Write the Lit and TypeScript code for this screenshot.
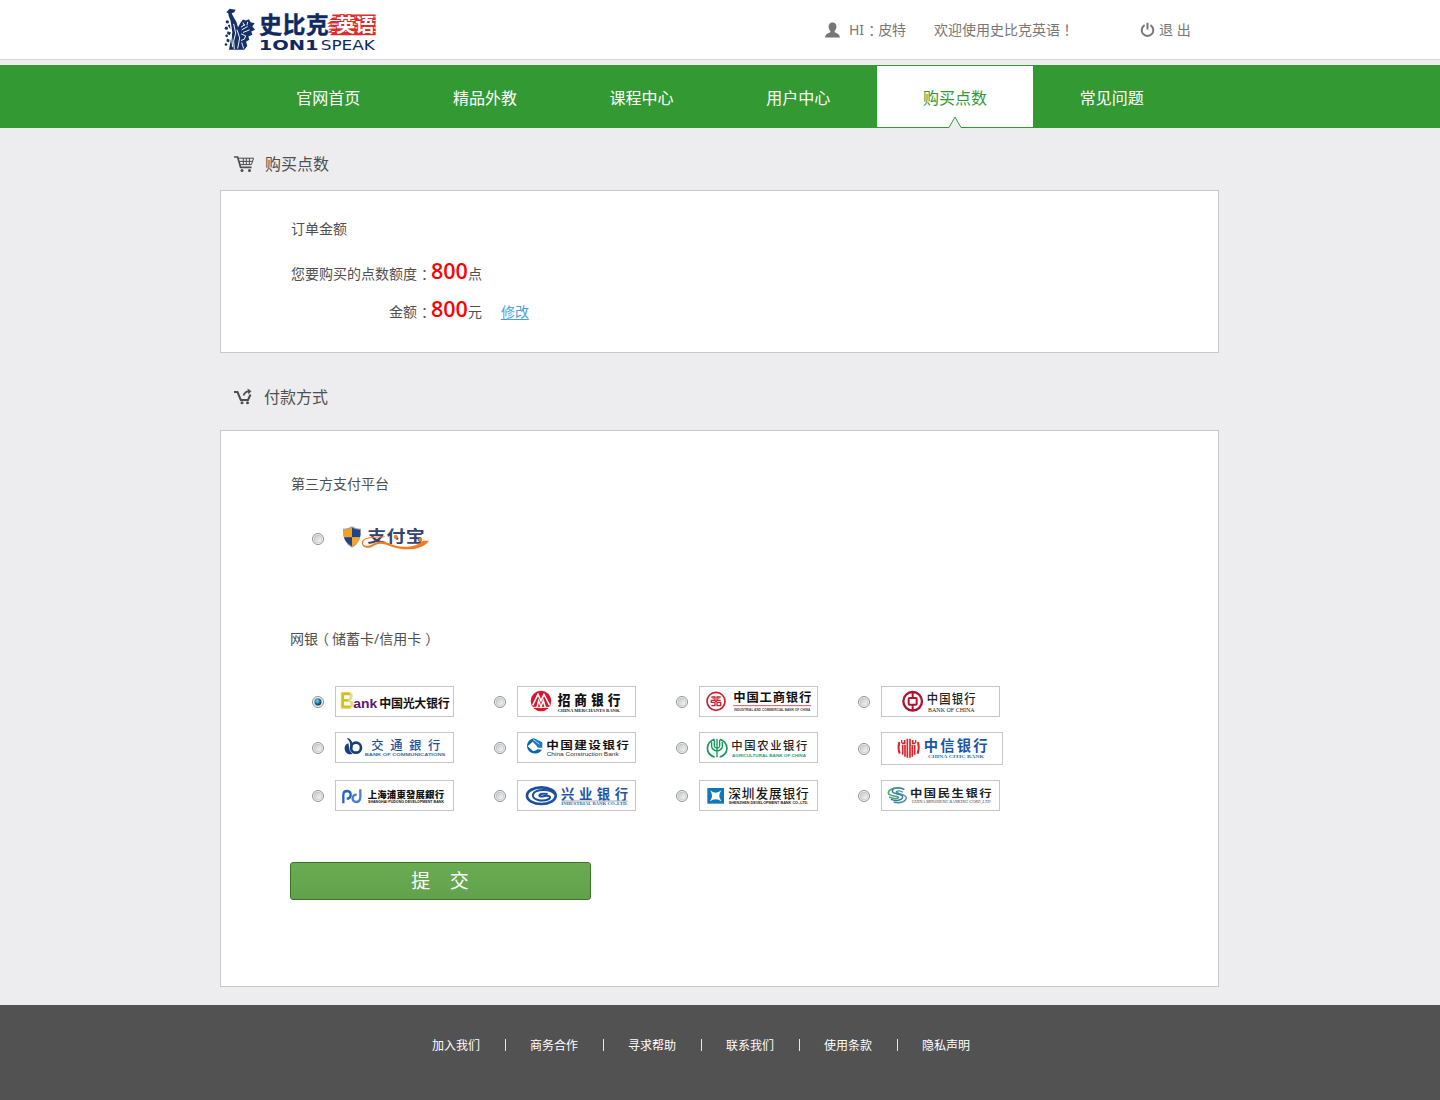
import { LitElement, html, svg, css } from "lit";
import { customElement, property, state } from "lit/decorators.js";

type Face = "sans" | "wide" | "serif" | "cjk";

/** One line of lettering inside a logo, stretched to an exact width. */
const line = (
  x: number,
  y: number,
  width: number,
  size: number,
  fill: string,
  text: string,
  face: Face = "cjk",
  weight = 700,
  extra = ""
) => svg`<text class="${face} ${extra}" x=${x} y=${y} textLength=${width}
  lengthAdjust="spacingAndGlyphs" font-size=${size} font-weight=${weight} fill=${fill}>${text}</text>`;

/** CJK lettering set one glyph per cell, from the left edge x over the given width. */
const cells = (
  x: number,
  y: number,
  width: number,
  size: number,
  fill: string,
  text: string,
  weight = 700,
  glyph = size
) => {
  const n = text.length;
  const step = (width - glyph) / (n - 1);
  const xs = Array.from({ length: n }, (_, i) => ((x + i * step) * size) / glyph).join(" ");
  return svg`<text class="cjk" transform="scale(${glyph / size} 1)" x=${xs} y=${y}
    font-size=${size} font-weight=${weight} fill=${fill}>${text}</text>`;
};

interface Bank {
  id: string;
  w?: number;
  h?: number;
  art: unknown;
}

const BANKS: Bank[] = [
  {
    id: "ceb",
    art: svg`
      <text class="sans" x="14" y="68" font-size="70" font-weight="700" fill="#e6dc72" textLength="44" lengthAdjust="spacingAndGlyphs">B</text>
      <path d="M22 24H44M22 43H40M22 62H46M23 22V64" stroke="#cdbd22" stroke-width="7" fill="none"/>
      ${line(55, 65, 72, 41, "#5b1478", "ank", "sans")}
      ${cells(133, 66, 211, 36, "#111", "中国光大银行", 700)}`,
  },
  {
    id: "cmb",
    art: svg`
      <circle cx="72" cy="45" r="31" fill="#d3172e"/>
      <path d="M47 58L63 25L72 44L81 25L98 58M60 64L65 44L72 62L79 44L85 64" stroke="#fff" stroke-width="4.5" fill="none"/>
      <path d="M44 64H100" stroke="#fff" stroke-width="3"/>
      ${cells(122, 58, 188, 40, "#111", "招商银行", 900, 38)}
      ${line(122, 77, 186, 11, "#222", "CHINA MERCHANTS BANK", "serif")}`,
  },
  {
    id: "icbc",
    art: svg`
      <circle cx="51" cy="46" r="27" fill="none" stroke="#c8202c" stroke-width="5"/>
      <path d="M37 33H48V43H37V49H48V59H37M65 33H54V43H65M54 49H65V59H54V49M41 38H44M58 38H61M48 46H54" stroke="#c8202c" stroke-width="4" fill="none"/>
      ${cells(103, 49, 234, 37, "#111", "中国工商银行", 700)}
      <path d="M103 59H337" stroke="#e0555c" stroke-width="3"/>
      ${line(105, 74, 229, 10, "#444", "INDUSTRIAL AND COMMERCIAL BANK OF CHINA", "sans")}`,
  },
  {
    id: "boc",
    art: svg`
      <circle cx="95" cy="46" r="28" fill="none" stroke="#b0122f" stroke-width="7"/>
      <rect x="83" y="36" width="24" height="20" rx="3" fill="none" stroke="#b0122f" stroke-width="6"/>
      <path d="M95 18V35M95 57V74" stroke="#b0122f" stroke-width="6"/>
      ${cells(137, 50, 147, 38, "#222", "中国银行", 500, 34)}
      ${line(141, 77, 140, 17, "#222", "BANK OF CHINA", "serif", 400)}`,
  },
  {
    id: "bocom",
    art: svg`
      <circle cx="63" cy="47" r="15" fill="none" stroke="#173f7d" stroke-width="8"/>
      <path d="M38 18C49 22 54 31 53 47L46 50C47 35 44 25 36 20Z" fill="#173f7d"/>
      <path d="M41 34C28 37 25 51 34 62C39 67 47 68 53 65C43 58 41 47 41 34Z" fill="#173f7d"/>
      ${cells(109, 53, 207, 37, "#1f4f96", "交通銀行", 500)}
      ${line(89, 71, 242, 12, "#3f689f", "BANK OF COMMUNICATIONS", "sans")}`,
  },
  {
    id: "ccb",
    art: svg`
      <path d="M51 19A24 23 0 1 0 75 53L61 52A14 13 0 0 1 48 57L32 43L47 29Z" fill="#0d63b4"/>
      <path d="M51 19L76 31V47H63L46 29Z" fill="#1c76c6"/>
      <path d="M48 31L60 43L48 55L36 43Z" fill="#fff"/>
      <path d="M49 23L68 37" stroke="#fff" stroke-width="2"/>
      ${cells(88, 51, 248, 30, "#111", "中国建设银行", 700, 38)}
      ${line(89, 72, 216, 16, "#333", "China Construction Bank", "sans", 400)}`,
  },
  {
    id: "abc",
    art: svg`
      <path d="M47 22A27 27 0 0 0 47 75M62 22A27 27 0 0 1 62 75" fill="none" stroke="#139a58" stroke-width="5"/>
      <path d="M54 20V76M38 30V44Q39 54 54 57M70 30V44Q69 54 54 57M46 24V42Q47 48 54 49M62 24V42Q61 48 54 49" fill="none" stroke="#139a58" stroke-width="4"/>
      ${cells(97, 55, 228, 34, "#222", "中国农业银行", 500)}
      ${line(99, 75, 222, 12.5, "#2f9c67", "AGRICULTURAL BANK OF CHINA", "sans")}`,
  },
  {
    id: "citic",
    w: 122,
    h: 33,
    art: svg`
      <path d="M79 20V77M87 20V77" fill="none" stroke="#d8262c" stroke-width="5"/>
      <path d="M71 24V34H63M65 39V68M72 39V74M95 24V34H103M101 39V68M94 39V74" fill="none" stroke="#d8262c" stroke-width="5"/>
      <path d="M62 24V34M104 24V34" fill="none" stroke="#d8262c" stroke-width="4"/>
      <path d="M55 30Q50 47 56 65M111 30Q116 47 110 65" fill="none" stroke="#d8262c" stroke-width="6"/>
      ${cells(128, 57, 192, 43, "#1b57a8", "中信银行", 700)}
      ${line(141, 79, 168, 15, "#3a69ae", "CHINA CITIC BANK", "serif")}`,
  },
  {
    id: "spdb",
    art: svg`
      <path d="M25 70V45Q25 33 36 33Q48 34 47 46Q46 56 35 56" fill="none" stroke="#2d64b5" stroke-width="7"/>
      <path d="M76 28V52Q75 66 63 66Q52 65 53 54Q54 44 65 44" fill="none" stroke="#4a80cc" stroke-width="7"/>
      ${cells(98, 53, 229, 28, "#111", "上海浦東發展銀行", 900)}
      ${line(99, 69, 228, 11, "#111", "SHANGHAI PUDONG DEVELOPMENT BANK", "sans", 800)}`,
  },
  {
    id: "cib",
    art: svg`
      <ellipse cx="73" cy="47" rx="43" ry="25" fill="none" stroke="#1b4f9e" stroke-width="8"/>
      <path d="M112 42C104 27 56 25 48 43C44 60 76 67 96 57C104 51 96 45 82 48C77 50 68 51 67 47C68 41 82 40 92 42" fill="none" stroke="#1b4f9e" stroke-width="6"/>
      ${cells(132, 56, 201, 40, "#1d55a3", "兴业银行", 700)}
      <path d="M133 63H332" stroke="#a3a8ae" stroke-width="3"/>
      ${line(133, 76, 199, 12, "#3567a9", "INDUSTRIAL BANK CO.,LTD.", "serif")}`,
  },
  {
    id: "sdb",
    art: svg`
      <rect x="25" y="24" width="50" height="47" fill="#0f77ba"/>
      <path d="M33 31Q50 45 67 31Q55 47 67 64Q50 51 33 64Q45 47 33 31Z" fill="#fff"/>
      ${cells(88, 55, 241, 38, "#161616", "深圳发展银行", 500)}
      ${line(89, 72, 239, 10, "#222", "SHENZHEN DEVELOPMENT BANK CO.,LTD.", "sans")}`,
  },
  {
    id: "cmbc",
    art: svg`
      <path d="M70 29C56 20 34 23 34 33C35 45 65 39 65 51C64 61 44 64 30 58" fill="none" stroke="#3471ad" stroke-width="4.5"/>
      <path d="M66 37C58 31 46 32 46 36C48 42 77 42 76 54C73 67 52 71 38 66" fill="none" stroke="#3d8f98" stroke-width="4"/>
      <path d="M54 25C34 22 21 31 22 40C26 51 53 47 53 53C50 58 34 56 24 51" fill="none" stroke="#42a56e" stroke-width="4.5"/>
      ${cells(87, 52, 245, 30, "#222", "中国民生银行", 700, 37)}
      ${line(92, 70, 236, 12, "#444", "CHINA MINSHENG BANKING CORP.,LTD", "serif", 400, "slant")}`,
  },
];

@customElement("pay-radio")
class PayRadio extends LitElement {
  @property({ type: Boolean }) on = false;

  static styles = css`
    :host {
      display: block;
      width: 13px;
      height: 13px;
      flex: none;
    }
    .dial {
      display: block;
    }
  `;

  render() {
    return html`<svg class="dial" width="13" height="13" viewBox="0 0 13 13">
      <defs>
        <linearGradient id="g" x1="0" y1="0" x2="1" y2="1">
          <stop offset="0" stop-color="#c3c6ca" />
          <stop offset="1" stop-color="#fafafa" />
        </linearGradient>
        <radialGradient id="b" cx=".4" cy=".35" r=".7">
          <stop offset="0" stop-color="#8fdcf5" />
          <stop offset=".5" stop-color="#1c7cad" />
          <stop offset="1" stop-color="#0a3350" />
        </radialGradient>
      </defs>
      <circle cx="6" cy="7" r="5.5" fill="#fafafa" stroke="#8e8f8f" />
      <circle cx="6" cy="7" r="3.9" fill="url(#g)" stroke="#b4b8bc" stroke-width=".6" />
      ${this.on ? svg`<circle cx="6" cy="7" r="3.4" fill="url(#b)"/>` : null}
    </svg>`;
  }
}

@customElement("app-root")
class AppRoot extends LitElement {
  @state() private chosen = "ceb";

  static styles = css`
    :host {
      display: block;
      width: 1440px;
      height: 1100px;
      overflow: hidden;
      background: #ededef;
      color: #505050;
      font: 14px/20px "Open Sans", "Noto Sans CJK SC", sans-serif;
    }
    .wrap {
      width: 999px;
      margin-left: 220px;
    }
    .bang {
      font-family: "Noto Sans CJK TC", sans-serif;
      line-height: 1;
    }
    .colon {
      font-feature-settings: "halt";
      margin: 0 3px 0 4px;
    }
    .latin {
      font-family: "Noto Sans", sans-serif;
    }
    .cjk {
      font-family: "Noto Sans CJK SC", sans-serif;
    }
    .sans {
      font-family: "Liberation Sans", sans-serif;
    }
    .wide {
      font-family: "DejaVu Sans", sans-serif;
    }
    .serif {
      font-family: "Liberation Serif", serif;
    }
    .slant {
      font-style: italic;
    }
    svg {
      display: block;
      flex: none;
    }

    .top {
      height: 59px;
      background: #fff;
      border-bottom: 1px solid #d6d6d6;
    }
    .bar {
      display: flex;
      height: 59px;
      align-items: center;
      color: #777;
    }
    .brand {
      margin-right: 445px;
    }
    .hello {
      width: 85px;
      margin-left: 9px;
    }
    .welcome {
      width: 206px;
    }
    .leave {
      margin-left: 4px;
    }

    .nav {
      height: 63px;
      margin-top: 5px;
      background: #339933;
    }
    .tabs {
      display: flex;
      height: 63px;
      padding: 1px 0 1px 29.9px;
      box-sizing: border-box;
    }
    .tab {
      position: relative;
      width: 156.7px;
      flex: none;
      text-align: center;
      font-size: 16px;
      line-height: 65px;
      color: #fff;
    }
    .tab.current {
      background: #fff;
      color: #339933;
    }
    .notch {
      position: absolute;
      left: 71px;
      bottom: -1px;
    }

    .title {
      display: flex;
      align-items: center;
      font-size: 16px;
      line-height: 24px;
      box-sizing: border-box;
    }
    .title.buy {
      height: 62px;
      padding: 10px 0 0 14px;
      gap: 10px;
    }
    .title.pay {
      height: 77px;
      padding: 10px 0 0 14px;
      gap: 11px;
    }
    .panel {
      background: #fff;
      border: 1px solid #c9c9c9;
      box-sizing: border-box;
      padding-left: 70px;
    }
    .order {
      height: 163px;
      padding-top: 28px;
    }
    .sum {
      display: grid;
      grid-template-columns: 140px auto auto;
      justify-content: start;
      align-items: baseline;
      grid-auto-rows: 38px;
      padding-top: 22px;
    }
    .label {
      text-align: right;
      white-space: nowrap;
    }
    .big {
      color: #f00;
      font-family: "Open Sans", sans-serif;
      font-size: 21.5px;
      font-weight: 600;
    }
    .edit {
      margin-left: 19px;
      color: #4a9fe0;
      text-decoration: underline;
      text-underline-offset: 2px;
    }
    .methods {
      height: 557px;
      padding-top: 43px;
    }
    .option {
      display: flex;
      align-items: center;
      cursor: pointer;
    }
    .ali {
      padding: 31px 0 0 21px;
      gap: 17px;
    }
    .sub {
      padding-top: 78px;
      margin-left: -1px;
    }
    .open {
      font-feature-settings: "halt";
      margin: 0 3px 0 4px;
    }
    .close {
      font-feature-settings: "halt";
      margin-left: 4px;
    }
    .banks {
      display: grid;
      grid-template-columns: repeat(4, 182px);
      row-gap: 15px;
      align-items: start;
      padding: 37px 0 0 21px;
    }
    .banks .option {
      gap: 10px;
    }
    .card {
      border: 1px solid #c6c6c6;
      background: #fff;
      flex: none;
    }
    .submit {
      display: block;
      width: 301px;
      height: 38px;
      margin: 51px 0 0 -1px;
      padding: 1px 1px 0 0;
      border: 1px solid #3c7426;
      border-radius: 3px;
      background: linear-gradient(#6aac52, #61a14b);
      color: #fff;
      font: 19px/35px "Open Sans", "Noto Sans CJK SC", sans-serif;
      text-align: center;
      white-space: pre;
      cursor: pointer;
    }
    .foot {
      display: flex;
      height: 95px;
      margin-top: 18px;
      padding: 34px 0 0 432px;
      box-sizing: border-box;
      background: #525252;
      color: #fff;
      font-size: 12px;
      line-height: 13px;
    }
    .link {
      display: flex;
      width: 98px;
      height: 13px;
      flex: none;
    }
    .link:not(:last-child)::after {
      content: "";
      width: 1px;
      height: 12px;
      margin-left: 25px;
      background: #e8e8e8;
    }
  `;

  private brand() {
    return svg`<svg class="brand" width="160" height="50" viewBox="15 13.5 480 150">
      <g fill="#16316a">
        <path d="M34 35L44 25L62 28L58 35L50 38L56 50L64 64L69 80L77 66L84 57L92 60L102 56L107 65L119 68L112 78L120 88L109 93L112 103L100 108L103 118L93 124L97 136L88 148H42L47 120L52 96L47 62L41 46L40 38Z"/>
        <circle cx="37" cy="64" r="5"/><circle cx="34" cy="83" r="5"/><circle cx="35" cy="106" r="4"/><circle cx="33" cy="132" r="4"/>
        <path d="M38 92L48 96L44 104L36 100ZM36 114L44 118L42 126L34 122ZM38 74L45 72L46 86Z"/>
      </g>
      <path d="M56 70L62 98L56 122L58 146M66 88L74 112L68 144M78 80L90 72M80 88L98 78M84 96L104 88M78 100L92 106L88 116L78 120M80 126L86 144M49 104L53 140M84 66L88 76M98 64L96 74" stroke="#fff" stroke-width="2.8" fill="none"/>
      <g stroke="#0f2a5f" stroke-width="1.5">${cells(133, 98, 208, 68, "#0f2a5f", "史比克", 700)}</g>
      <path d="M352 42H482V104H345L352 97H338L350 88H340L352 79H338L350 70H336L350 60H342L352 52Z" fill="#dd2a2a"/>
      <path d="M348 49H482M344 60H482M350 71H482M344 82H482M350 93H482" stroke="#fff" stroke-width="3.5"/>
      <g stroke="#dd2a2a" stroke-width="6" paint-order="stroke">${cells(363, 95, 116, 58, "#fff", "英语", 700)}</g>
      ${line(131, 149, 180, 42, "#0f2a5f", "1ON1", "wide")}
      ${line(317, 149, 163, 41, "#0f2a5f", "SPEAK", "wide", 400)}
    </svg>`;
  }

  private alipay() {
    const swoosh =
      "M128 37C100 39 72 37 64 49C58 62 76 68 91 58C112 43 130 50 152 59C185 71 225 65 243 47L261 47C240 76 192 78 152 66C122 54 109 52 93 64C73 76 54 62 61 47C70 34 100 36 128 34Z";
    return svg`<svg width="90" height="26" viewBox="0 0 270 78">
      <path d="M30 4Q42 12 57 11Q60 52 30 68Q0 52 3 11Q18 12 30 4Z" fill="#9aa0ab"/>
      <path d="M30 8V37H6Q4 25 6 14Q20 14 30 8Z" fill="#f7a01d"/>
      <path d="M30 8Q41 14 54 14Q56 26 54 37H30Z" fill="#1e4388"/>
      <path d="M30 37H54Q49 54 30 64Z" fill="#f9a51d"/>
      <path d="M30 37V64Q11 54 6 37Z" fill="#1e4388"/>
      ${cells(76, 52, 172, 47, "#34446f", "支付宝", 700, 57)}
      <path d=${swoosh} fill="#f47b20"/>
      <circle cx="161" cy="36" r="6" fill="#f47b20"/><circle cx="235" cy="44" r="6" fill="#f47b20"/>
    </svg>`;
  }

  render() {
    const tabs = ["官网首页", "精品外教", "课程中心", "用户中心", "购买点数", "常见问题"];
    const links = ["加入我们", "商务合作", "寻求帮助", "联系我们", "使用条款", "隐私声明"];
    return html`
      <header class="top">
        <div class="wrap bar">
          ${this.brand()}
          <svg width="15" height="16" viewBox="0 0 15 16">
            <path d="M7.5 0.5C10 .5 11.5 2.2 11.4 4.8C11.3 6.8 10.5 8.2 9.6 9.1V10.2C11 11 14.7 11.6 15 15.5H0C.3 11.6 4 11 5.4 10.2V9.1C4.5 8.2 3.7 6.8 3.6 4.8C3.5 2.2 5 .5 7.5 .5Z" fill="#777" />
          </svg>
          <span class="hello"><span class="latin">HI</span><span class="colon">：</span>皮特</span>
          <span class="welcome">欢迎使用史比克英语<span class="bang">！</span></span>
          <svg width="15" height="16" viewBox="0 0 15 16">
            <path d="M4.6 3.2A5.8 5.8 0 1 0 10.4 3.2M7.5 .8V7.6" fill="none" stroke="#777" stroke-width="2" />
          </svg>
          <span class="leave">退 出</span>
        </div>
      </header>
      <nav class="nav">
        <div class="wrap tabs">
          ${tabs.map(
            (t) => html`<div class="tab ${t === "购买点数" ? "current" : ""}">
              ${t}${t === "购买点数"
                ? html`<svg class="notch" width="14" height="12" viewBox="0 0 14 12">
                    <path d="M0.5 12L7 1L13.5 12Z" fill="#ededef" />
                    <path d="M0 11.5H1L7 1L13 11.5H14" fill="none" stroke="#339933" />
                  </svg>`
                : null}
            </div>`
          )}
        </div>
      </nav>
      <main class="wrap">
        <div class="title buy">
          <svg width="21" height="18" viewBox="0 0 21 18">
            <path d="M0 2H3.6L6.6 12.3H17.5" fill="none" stroke="#4d4d4d" stroke-width="1.7" />
            <path d="M4.2 3.2H19.6L17.4 9.6H6M5 6.4H18.5M9.3 3V10M12.3 3V10M15.4 3V10" fill="none" stroke="#4d4d4d" stroke-width="1" />
            <circle cx="8" cy="15.6" r="1.5" fill="#4d4d4d" />
            <circle cx="15.5" cy="15.6" r="1.5" fill="#4d4d4d" />
          </svg>
          <span>购买点数</span>
        </div>
        <section class="panel order">
          <div>订单金额</div>
          <div class="sum">
            <span class="label">您要购买的点数额度<span class="colon">：</span></span>
            <span><span class="big">800</span>点</span>
            <span></span>
            <span class="label">金额<span class="colon">：</span></span>
            <span><span class="big">800</span>元</span>
            <a class="edit">修改</a>
          </div>
        </section>
        <div class="title pay">
          <svg width="19" height="17" viewBox="0 0 19 17">
            <path d="M0 4H3.5L6.8 12H14L16.5 6.5" fill="none" stroke="#4d4d4d" stroke-width="2" />
            <path d="M9.5 7.5Q11 3.5 14.5 3.4" fill="none" stroke="#4d4d4d" stroke-width="1.8" />
            <path d="M13.5 .6L17.5 3.3L14.3 6.2Z" fill="#4d4d4d" />
            <circle cx="8" cy="14.8" r="1.5" fill="#4d4d4d" />
            <circle cx="13.5" cy="14.8" r="1.5" fill="#4d4d4d" />
          </svg>
          <span>付款方式</span>
        </div>
        <section class="panel methods">
          <div>第三方支付平台</div>
          <div class="option ali" @click=${() => (this.chosen = "alipay")}>
            <pay-radio ?on=${this.chosen === "alipay"}></pay-radio>
            ${this.alipay()}
          </div>
          <div class="sub">网银<span class="open">（</span>储蓄卡/信用卡<span class="close">）</span></div>
          <div class="banks">
            ${BANKS.map(({ id, w = 119, h = 31, art }) => {
              return html`<div class="option" @click=${() => (this.chosen = id)}>
                <pay-radio ?on=${this.chosen === id}></pay-radio>
                <div class="card">
                  <svg width=${w - 2} height=${h - 2} viewBox="3 3 ${(w - 2) * 3} ${(h - 2) * 3}">${art}</svg>
                </div>
              </div>`;
            })}
          </div>
          <button class="submit">提    交</button>
        </section>
      </main>
      <footer class="foot">${links.map((l) => html`<div class="link">${l}</div>`)}</footer>
    `;
  }
}
